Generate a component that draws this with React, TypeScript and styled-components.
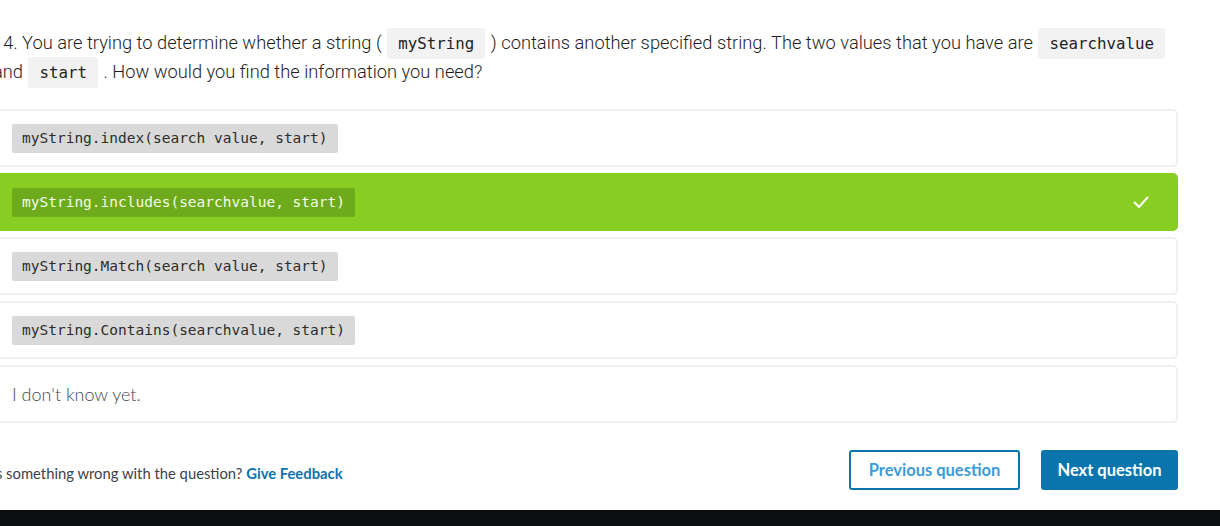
import styled, { createGlobalStyle } from "styled-components";

const GlobalStyle = createGlobalStyle`
  html, body {
    margin: 0;
    padding: 0;
    background: #ffffff;
    overflow: hidden;
  }
`;

type Answer = {
  code?: string;
  text?: string;
  correct?: boolean;
};

const answers: Answer[] = [
  { code: "myString.index(search value, start)" },
  { code: "myString.includes(searchvalue, start)", correct: true },
  { code: "myString.Match(search value, start)" },
  { code: "myString.Contains(searchvalue, start)" },
  { text: "I don't know yet." },
];

function CheckIcon() {
  return (
    <svg width="18" height="18" viewBox="0 0 18 18" fill="none">
      <polyline
        points="2.5,9.5 7,14 15.5,4.5"
        stroke="#ffffff"
        strokeWidth="2"
        strokeLinecap="round"
        strokeLinejoin="round"
      />
    </svg>
  );
}

function App() {
  return (
    <>
      <GlobalStyle />
      <Page>
        <Question>
          14. You are trying to determine whether a string ({" "}
          <InlineCode>myString</InlineCode> ) contains another specified string.
          The two values that you have are <InlineCode>searchvalue</InlineCode>{" "}
          and <InlineCode>start</InlineCode> . How would you find the
          information you need?
        </Question>

        <AnswerList>
          {answers.map((answer, index) => (
            <AnswerCard key={index} $correct={answer.correct}>
              {answer.code ? (
                <AnswerCode $correct={answer.correct}>{answer.code}</AnswerCode>
              ) : (
                <AnswerText>{answer.text}</AnswerText>
              )}
              {answer.correct && (
                <CheckMark>
                  <CheckIcon />
                </CheckMark>
              )}
            </AnswerCard>
          ))}
        </AnswerList>

        <Actions>
          <FeedbackText>
            Is something wrong with the question?{" "}
            <FeedbackLink>Give Feedback</FeedbackLink>
          </FeedbackText>
          <ButtonGroup>
            <OutlineButton>Previous question</OutlineButton>
            <PrimaryButton>Next question</PrimaryButton>
          </ButtonGroup>
        </Actions>
      </Page>
      <BottomBar />
    </>
  );
}

const Page = styled.div`
  width: 1186px;
  margin-left: -8px;
  padding-top: 29px;
`;

const Question = styled.p`
  margin: 0 0 22px 0;
  padding-left: 1px;
  padding-right: 10px;
  font-family: Roboto, "Liberation Sans", sans-serif;
  font-weight: 300;
  font-size: 18.3px;
  line-height: 28px;
  color: #1e1e1e;
`;

const InlineCode = styled.code`
  font-family: "DejaVu Sans Mono", "Liberation Mono", monospace;
  font-size: 15.8px;
  background: #f2f2f2;
  color: #222222;
  padding: 6px 11px;
  margin: 0 1px;
  border-radius: 3px;
`;

const AnswerList = styled.div`
  display: flex;
  flex-direction: column;
  gap: 6px;
`;

const AnswerCard = styled.div<{ $correct?: boolean }>`
  position: relative;
  display: flex;
  align-items: center;
  box-sizing: border-box;
  height: 58px;
  padding: 0 18px;
  border: 2px solid ${(p) => (p.$correct ? "#88cd22" : "#f0f0f0")};
  border-radius: 5px;
  background: ${(p) => (p.$correct ? "#88cd22" : "#ffffff")};
`;

const AnswerCode = styled.code<{ $correct?: boolean }>`
  display: inline-flex;
  align-items: center;
  height: 29px;
  padding: 0 10px;
  font-family: "DejaVu Sans Mono", "Liberation Mono", monospace;
  font-size: 14.5px;
  border-radius: 2px;
  background: ${(p) => (p.$correct ? "#6dab1d" : "#d9d9d9")};
  color: ${(p) => (p.$correct ? "#f4fbe8" : "#2d2d2d")};
`;

const AnswerText = styled.span`
  font-family: Lato, "Open Sans", sans-serif;
  font-weight: 300;
  font-size: 18px;
  color: #444a52;
`;

const CheckMark = styled.span`
  margin-left: auto;
  margin-right: 8px;
  display: flex;
`;

const Actions = styled.div`
  display: flex;
  align-items: center;
  justify-content: space-between;
  margin-top: 27px;
`;

const FeedbackText = styled.span`
  padding-top: 6px;
  font-family: Lato, "Open Sans", sans-serif;
  font-size: 14.8px;
  color: #3d4248;
`;

const FeedbackLink = styled.a`
  font-weight: 700;
  color: #0f73ad;
  cursor: pointer;
`;

const ButtonGroup = styled.div`
  display: flex;
  gap: 21px;
`;

const BaseButton = styled.button`
  box-sizing: border-box;
  height: 40px;
  border-radius: 3px;
  font-family: Lato, "Open Sans", sans-serif;
  font-weight: 700;
  font-size: 16.5px;
  cursor: pointer;
`;

const OutlineButton = styled(BaseButton)`
  width: 171px;
  background: #ffffff;
  border: 2px solid #0a75ad;
  color: #3c9bd8;
`;

const PrimaryButton = styled(BaseButton)`
  width: 137px;
  background: #0a75ad;
  border: 2px solid #0a75ad;
  color: #ffffff;
`;

const BottomBar = styled.div`
  margin-top: 20px;
  height: 40px;
  background: #0e0f12;
`;

export default App;
